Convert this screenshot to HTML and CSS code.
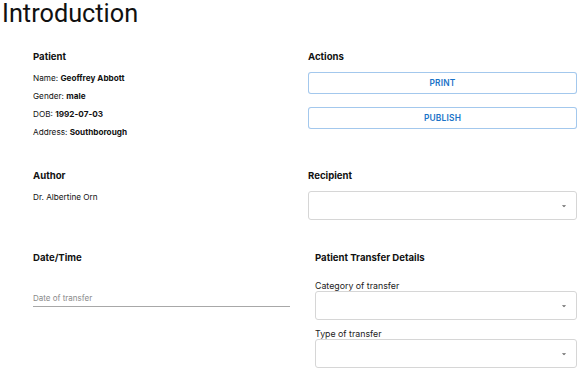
FILE: index.html
```html
<!DOCTYPE html>
<html lang="en">
<head>
    <meta charset="UTF-8">
    <meta name="viewport" content="width=device-width, initial-scale=1.0">
    <title>Introduction</title>
    <link rel="stylesheet" href="styles.css">
</head>
<body>
    <h1 class="title">Introduction</h1>
    <div class="sheet">
        <div class="row row-top">
            <div class="section">
                <div class="heading">Patient</div>
                <div class="details">
                    <div class="line">Name: <b>Geoffrey Abbott</b></div>
                    <div class="line">Gender: <b>male</b></div>
                    <div class="line">DOB: <b>1992-07-03</b></div>
                    <div class="line">Address: <b>Southborough</b></div>
                </div>
            </div>
            <div class="section">
                <div class="heading">Actions</div>
                <div class="actions">
                    <button type="button" class="outline-btn">Print</button>
                    <button type="button" class="outline-btn">Publish</button>
                </div>
            </div>
        </div>

        <div class="row row-middle">
            <div class="section">
                <div class="heading">Author</div>
                <div class="details">
                    <div class="line">Dr. Albertine Orn</div>
                </div>
            </div>
            <div class="section">
                <div class="heading">Recipient</div>
                <div class="select recipient">
                    <svg class="arrow" viewBox="0 0 24 24"><path d="M7 10l5 5 5-5z"/></svg>
                </div>
            </div>
        </div>

        <div class="row row-bottom">
            <div class="section">
                <div class="heading">Date/Time</div>
                <input type="text" class="date-input" placeholder="Date of transfer">
            </div>
            <div class="section transfer">
                <div class="heading">Patient Transfer Details</div>
                <div class="field first">
                    <label class="field-label">Category of transfer</label>
                    <div class="select">
                        <svg class="arrow" viewBox="0 0 24 24"><path d="M7 10l5 5 5-5z"/></svg>
                    </div>
                </div>
                <div class="field">
                    <label class="field-label">Type of transfer</label>
                    <div class="select">
                        <svg class="arrow" viewBox="0 0 24 24"><path d="M7 10l5 5 5-5z"/></svg>
                    </div>
                </div>
            </div>
        </div>
    </div>
</body>
</html>
```

FILE: styles.css
```css
body {
    margin: 0;
    font-family: 'Inter', 'Roboto', sans-serif;
    color: #111;
    background-color: #fff;
    overflow: hidden;
}

.title {
    margin: 0 0 0 2px;
    font-family: 'Roboto', sans-serif;
    font-size: 25.3px;
    font-weight: 400;
    line-height: 28px;
    color: #111;
}

.sheet {
    padding: 0 5px 0 33px;
}

.row {
    display: grid;
    grid-template-columns: 257px 1fr;
    column-gap: 18px;
}

.row-top {
    margin-top: 22px;
}

.row-middle {
    margin-top: 28px;
}

.row-bottom {
    margin-top: 31px;
}

.heading {
    font-size: 9.6px;
    font-weight: 700;
    line-height: 14px;
}

.details {
    margin-top: 5px;
}

.line {
    font-size: 8.2px;
    line-height: 18px;
}

.line b {
    font-weight: 700;
}

.actions {
    display: flex;
    flex-direction: column;
    gap: 13px;
    margin-top: 8px;
}

.outline-btn {
    height: 22px;
    padding: 0;
    border: 1px solid rgba(25, 118, 210, 0.4);
    border-radius: 3px;
    background-color: #fff;
    color: #1a73c8;
    font-family: 'Inter', 'Roboto', sans-serif;
    font-size: 8.4px;
    font-weight: 600;
    letter-spacing: 0.2px;
    text-transform: uppercase;
    cursor: pointer;
}

.select {
    display: flex;
    align-items: center;
    justify-content: flex-end;
    box-sizing: border-box;
    height: 29px;
    padding-right: 7px;
    border: 1px solid #d6d6d6;
    border-radius: 3px;
}

.recipient {
    margin-top: 8px;
}

.arrow {
    width: 10px;
    height: 10px;
    fill: rgba(0, 0, 0, 0.6);
}

.date-input {
    display: block;
    box-sizing: border-box;
    width: 100%;
    height: 18px;
    margin-top: 24px;
    padding: 0;
    border: none;
    border-bottom: 1px solid #a8a8a8;
    font-family: 'Inter', 'Roboto', sans-serif;
    font-size: 8px;
    color: #222;
    outline: none;
}

.date-input::placeholder {
    color: #8a8a8a;
}

.transfer {
    padding-left: 7px;
}

.field {
    margin-top: 9px;
}

.field.first {
    margin-top: 16px;
}

.field-label {
    display: block;
    font-size: 8.8px;
    line-height: 10px;
    color: #222;
}
```
